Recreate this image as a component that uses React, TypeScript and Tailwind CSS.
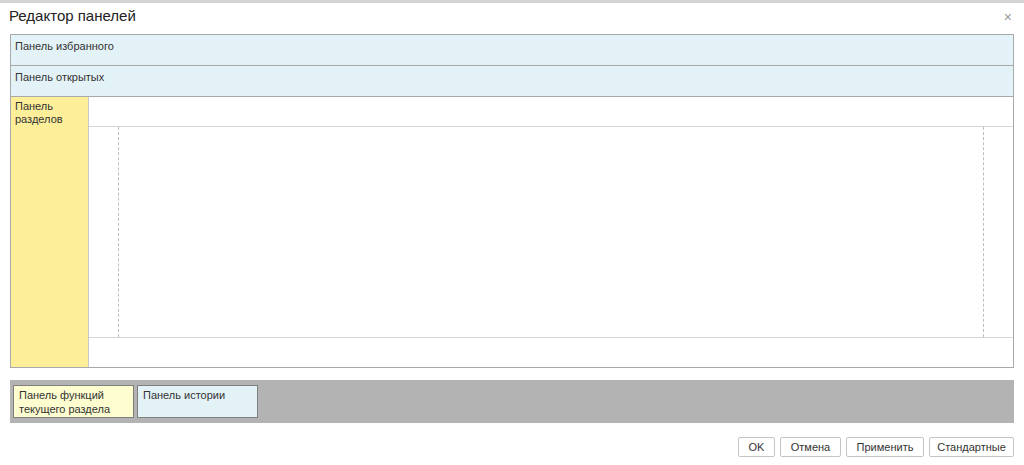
export default function App() {
  return (
    <div className="w-[1024px] h-[465px] bg-white relative overflow-hidden font-['Liberation_Sans',Arial,sans-serif] text-[#333]">
      {/* strip of the page behind */}
      <div className="h-[3px] bg-[#d4d4d4]"></div>

      {/* Header */}
      <div className="flex items-center justify-between h-[27px] pl-[9px] pr-[12px]">
        <h1 className="text-[15px] text-[#222]">Редактор панелей</h1>
        <span className="text-[#999] text-[14px] leading-none">×</span>
      </div>

      {/* Panels layout */}
      <div className="mx-[10px] mt-[4px] border border-[#a9a9a9] flex flex-col h-[334px]">
        <div className="h-[31px] bg-[#e3f2f7] border-b border-[#a9a9a9] px-[4px] pt-[3px] text-[11px]">
          Панель избранного
        </div>
        <div className="h-[31px] bg-[#e3f2f7] border-b border-[#a9a9a9] px-[4px] pt-[3px] text-[11px]">
          Панель открытых
        </div>
        <div className="flex-1 flex">
          <div className="w-[78px] bg-[#fdef9a] border-r border-[#c9c9c9] px-[4px] pt-[3px] text-[11px] leading-[13px]">
            Панель
            <br />
            разделов
          </div>
          <div className="flex-1 flex flex-col">
            <div className="h-[30px] border-b border-[#d6d6d6]"></div>
            <div className="flex-1 flex justify-between">
              <div className="w-[30px] border-r border-dashed border-[#bdbdbd]"></div>
              <div className="w-[30px] border-l border-dashed border-[#bdbdbd]"></div>
            </div>
            <div className="h-[30px] border-t border-[#d6d6d6]"></div>
          </div>
        </div>
      </div>

      {/* Bottom panels */}
      <div className="mx-[10px] mt-[12px] h-[43px] bg-[#b3b3b3] flex gap-[3px] px-[3px] py-[5px]">
        <div className="w-[121px] bg-[#fefdd0] border border-[#7f7f7f] px-[5px] pt-[2px] text-[11px] leading-[14px]">
          Панель функций
          <br />
          текущего раздела
        </div>
        <div className="w-[121px] bg-[#e3f2f7] border border-[#7f7f7f] px-[5px] pt-[2px] text-[11px] leading-[14px]">
          Панель истории
        </div>
      </div>

      {/* Buttons */}
      <div className="flex justify-end gap-[5px] mr-[10px] mt-[14px] text-[11px]">
        <button className="h-[20px] w-[37px] border border-[#c4c4c4] rounded-[2px] bg-white">OK</button>
        <button className="h-[20px] w-[61px] border border-[#c4c4c4] rounded-[2px] bg-white">Отмена</button>
        <button className="h-[20px] w-[78px] border border-[#c4c4c4] rounded-[2px] bg-white">Применить</button>
        <button className="h-[20px] w-[85px] border border-[#c4c4c4] rounded-[2px] bg-white">Стандартные</button>
      </div>
    </div>
  );
}
